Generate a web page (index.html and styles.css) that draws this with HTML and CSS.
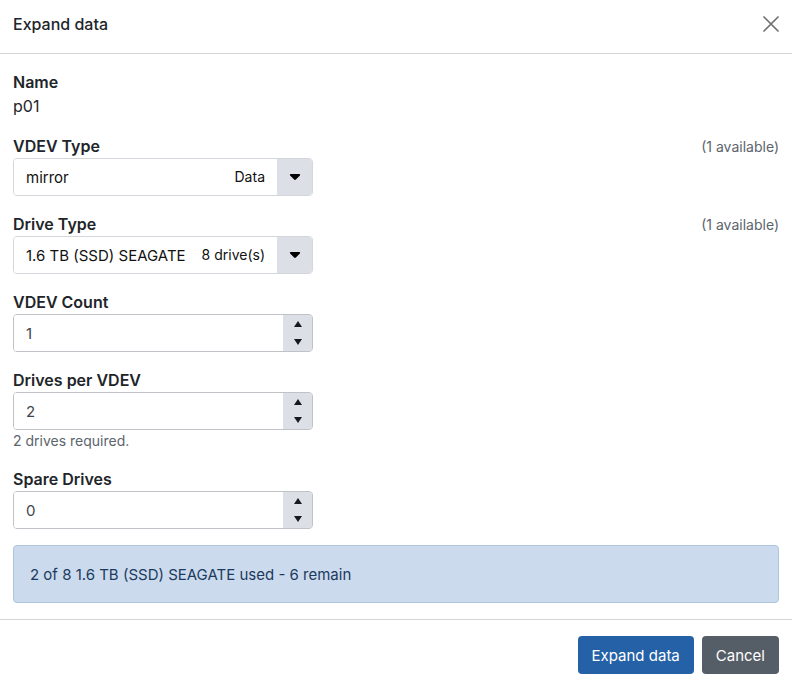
FILE: index.html
```html
<!DOCTYPE html>
<html lang="en">
<head>
<meta charset="utf-8">
<meta name="viewport" content="width=device-width, initial-scale=1">
<title>Expand data</title>
<link rel="stylesheet" href="styles.css">
</head>
<body>
<form class="dialog">
  <header class="dialog-header">
    <h1 class="dialog-title">Expand data</h1>
    <button type="button" class="close" aria-label="Close">
      <svg viewBox="0 0 16 16" width="16" height="16" aria-hidden="true"><path d="M1 1 15 15M15 1 1 15" fill="none" stroke="currentColor" stroke-width="1.7" stroke-linecap="round"/></svg>
    </button>
  </header>

  <main class="dialog-body">
    <div class="field">
      <div class="label">Name</div>
      <div>p01</div>
    </div>

    <div class="field">
      <div class="label-row">
        <label class="label" for="vdev-type">VDEV Type</label>
        <span class="hint">(1 available)</span>
      </div>
      <div class="control picker">
        <select id="vdev-type" class="entry"><option>mirror</option></select>
        <span class="picker-note">Data</span>
        <span class="picker-arrow"><svg viewBox="0 0 12 8" width="12" height="8" aria-hidden="true"><path d="M1.7 1h8.6c.8 0 1.1.9.6 1.4L6.900 6.500c-.5.5-1.300.5-1.800 0L1.100 2.400C.6 1.900.9 1 1.700 1z"/></svg></span>
      </div>
    </div>

    <div class="field">
      <div class="label-row">
        <label class="label" for="drive-type">Drive Type</label>
        <span class="hint">(1 available)</span>
      </div>
      <div class="control picker">
        <select id="drive-type" class="entry"><option>1.6 TB (SSD) SEAGATE</option></select>
        <span class="picker-note">8 drive(s)</span>
        <span class="picker-arrow"><svg viewBox="0 0 12 8" width="12" height="8" aria-hidden="true"><path d="M1.7 1h8.6c.8 0 1.1.9.6 1.4L6.900 6.500c-.5.5-1.300.5-1.800 0L1.100 2.400C.6 1.900.9 1 1.700 1z"/></svg></span>
      </div>
    </div>

    <div class="field">
      <label class="label" for="vdev-count">VDEV Count</label>
      <div class="control stepper">
        <input id="vdev-count" class="entry" type="number" min="1" value="1">
        <div class="steps">
          <button type="button" class="step" aria-label="Increase VDEV count"><svg viewBox="0 0 8 6" width="8" height="6" aria-hidden="true"><path d="M4 0 8 6H0z"/></svg></button>
          <button type="button" class="step" aria-label="Decrease VDEV count"><svg viewBox="0 0 8 6" width="8" height="6" aria-hidden="true"><path d="M0 0H8L4 6z"/></svg></button>
        </div>
      </div>
    </div>

    <div class="field">
      <label class="label" for="drives-per-vdev">Drives per VDEV</label>
      <div class="control stepper">
        <input id="drives-per-vdev" class="entry" type="number" min="2" value="2">
        <div class="steps">
          <button type="button" class="step" aria-label="Increase drives per VDEV"><svg viewBox="0 0 8 6" width="8" height="6" aria-hidden="true"><path d="M4 0 8 6H0z"/></svg></button>
          <button type="button" class="step" aria-label="Decrease drives per VDEV"><svg viewBox="0 0 8 6" width="8" height="6" aria-hidden="true"><path d="M0 0H8L4 6z"/></svg></button>
        </div>
      </div>
      <div class="hint">2 drives required.</div>
    </div>

    <div class="field">
      <label class="label" for="spare-drives">Spare Drives</label>
      <div class="control stepper">
        <input id="spare-drives" class="entry" type="number" min="0" value="0">
        <div class="steps">
          <button type="button" class="step" aria-label="Increase spare drives"><svg viewBox="0 0 8 6" width="8" height="6" aria-hidden="true"><path d="M4 0 8 6H0z"/></svg></button>
          <button type="button" class="step" aria-label="Decrease spare drives"><svg viewBox="0 0 8 6" width="8" height="6" aria-hidden="true"><path d="M0 0H8L4 6z"/></svg></button>
        </div>
      </div>
    </div>

    <div class="alert" role="status">2 of 8 1.6 TB (SSD) SEAGATE used - 6 remain</div>
  </main>

  <footer class="dialog-footer">
    <button type="submit" class="btn btn-primary">Expand data</button>
    <button type="button" class="btn btn-secondary">Cancel</button>
  </footer>
</form>
</body>
</html>
```
FILE: styles.css
```css
* {
  box-sizing: border-box;
}

body {
  margin: 0;
  background: #fff;
  color: #212529;
  font: 16px/24px Inter, "Liberation Sans", sans-serif;
}

button,
input,
select {
  margin: 0;
  font: inherit;
}

.dialog-header {
  display: flex;
  align-items: center;
  justify-content: space-between;
  padding: 12px 13px 17px;
  border-bottom: 1px solid #d3d5d8;
}

.dialog-title {
  margin: 0;
  font-size: 16px;
  font-weight: 500;
}

.close {
  display: flex;
  padding: 0;
  border: 0;
  background: none;
  color: #707070;
}

.dialog-body {
  display: flex;
  flex-direction: column;
  gap: 16px;
  padding: 16px 13px;
}

.label-row {
  display: flex;
  justify-content: space-between;
  align-items: center;
}

.label {
  display: block;
  font-weight: 600;
}

.hint {
  color: #5c646c;
  font-size: 14px;
  line-height: 21px;
}

.control {
  width: 300px;
  max-width: 100%;
  height: 38px;
  border: 1px solid #d3d6da;
  border-radius: 4px;
  overflow: hidden;
}

.entry {
  min-width: 0;
  width: 100%;
  padding: 1px 12px 0;
  border: 0;
  background: #fff;
  font-size: 15px;
  appearance: none;
}

.picker {
  display: grid;
  grid-template-columns: 1fr auto 35px;
}

.picker .entry {
  grid-area: 1 / 1 / 2 / 4;
  color: #111;
}

.picker-note {
  grid-area: 1 / 2;
  align-self: center;
  padding-right: 12px;
  color: #111;
  font-size: 14px;
  pointer-events: none;
}

.picker-arrow {
  grid-area: 1 / 3;
  display: flex;
  align-items: center;
  justify-content: center;
  background: #dcdfe6;
  color: #000;
  pointer-events: none;
}

.stepper {
  display: flex;
  border-color: #bfc3c8;
}

.stepper .entry {
  flex: 1;
  color: #3f454b;
  appearance: textfield;
}

.stepper .entry::-webkit-inner-spin-button {
  display: none;
}

.steps {
  display: flex;
  flex-direction: column;
  width: 29px;
  background: #dcdfe6;
}

.step {
  display: flex;
  flex: 1;
  align-items: center;
  justify-content: center;
  padding: 0;
  border: 0;
  background: none;
  color: #16191c;
}

.picker-arrow svg,
.step svg {
  fill: currentColor;
}

.alert {
  padding: 17px 16px 15px;
  border: 1px solid #adc5de;
  border-radius: 4px;
  background: #cbdbed;
  color: #1b3a5e;
  font-size: 15px;
}

.dialog-footer {
  display: flex;
  justify-content: flex-end;
  gap: 8px;
  padding: 16px 13px 13px;
  border-top: 1px solid #d3d5d8;
}

.btn {
  padding: 8px 14px 6px;
  border: 0;
  border-radius: 4px;
  color: #fff;
  font-size: 15px;
}

.btn-primary {
  background: #2561a6;
}

.btn-secondary {
  background: #555d66;
}
```
